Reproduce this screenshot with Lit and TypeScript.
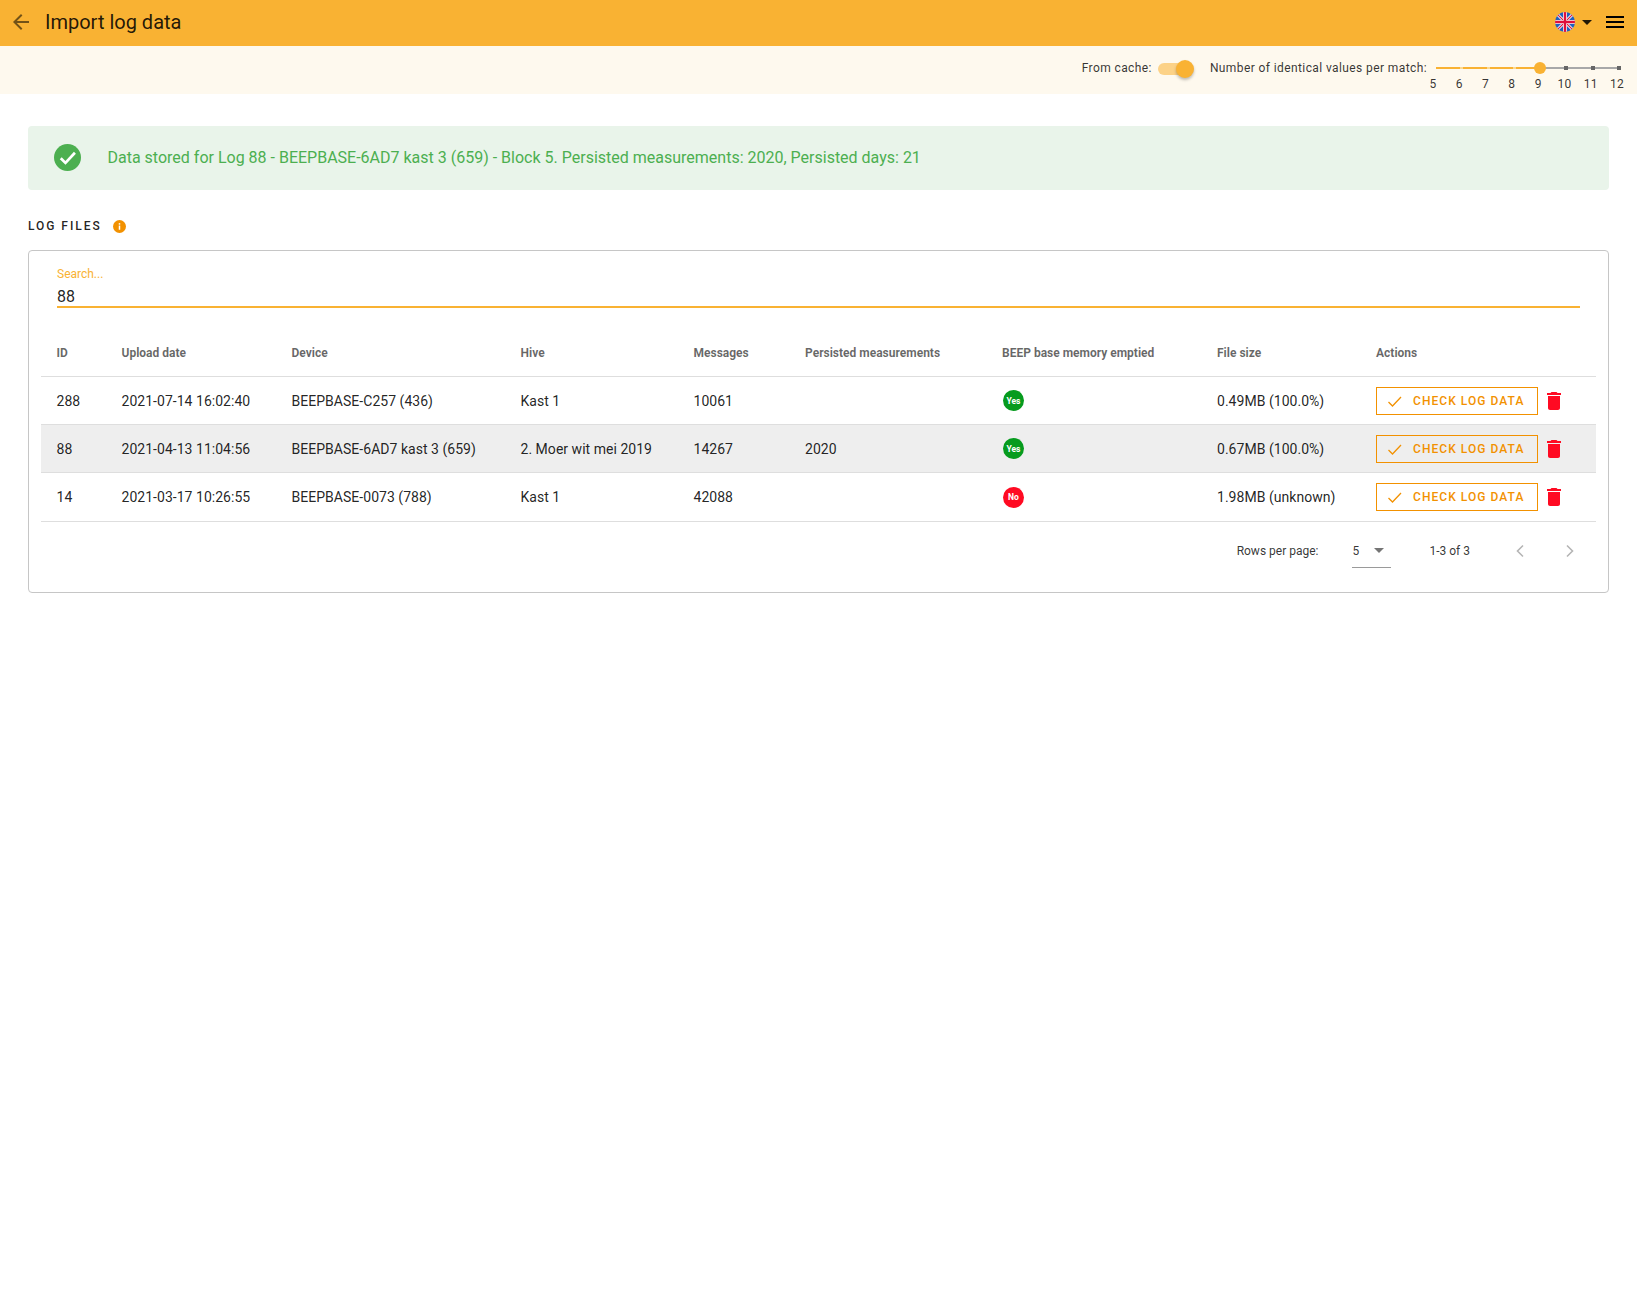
import { LitElement, html, css, svg } from "lit";
import { customElement } from "lit/decorators.js";

const rows = [
  { id: "288", date: "2021-07-14 16:02:40", device: "BEEPBASE-C257 (436)", hive: "Kast 1", msgs: "10061", pers: "", ok: true, size: "0.49MB (100.0%)", hl: false, h: 48 },
  { id: "88", date: "2021-04-13 11:04:56", device: "BEEPBASE-6AD7 kast 3 (659)", hive: "2. Moer wit mei 2019", msgs: "14267", pers: "2020", ok: true, size: "0.67MB (100.0%)", hl: true, h: 48 },
  { id: "14", date: "2021-03-17 10:26:55", device: "BEEPBASE-0073 (788)", hive: "Kast 1", msgs: "42088", pers: "", ok: false, size: "1.98MB (unknown)", hl: false, h: 49 },
];
const heads = ["ID", "Upload date", "Device", "Hive", "Messages", "Persisted measurements", "BEEP base memory emptied", "File size", "Actions"];
const marks = ["5", "6", "7", "8", "9", "10", "11", "12"];
const gaps = [29, 56, 82];
const ticks = [133, 160, 186];

const flag = svg`<svg class="flag" viewBox="0 0 20 20" width="20" height="20">
  <defs><clipPath id="fc"><circle cx="10" cy="10" r="10"/></clipPath></defs>
  <g clip-path="url(#fc)">
    <rect width="20" height="20" fill="#1f5fc0"/>
    <path d="M0 0L20 20M20 0L0 20" stroke="#f4f4f4" stroke-width="3"/>
    <path d="M0 0L20 20M20 0L0 20" stroke="#d8143c" stroke-width="1.1"/>
    <path d="M10 0V20M0 10H20" stroke="#f4f4f4" stroke-width="4"/>
    <path d="M10 0V20M0 10H20" stroke="#e0103a" stroke-width="2.4"/>
  </g></svg>`;

@customElement("app-root")
export class AppRoot extends LitElement {
  static styles = css`
    :host { display: block; min-height: 1305px; background: #fff; font-family: Roboto, sans-serif; color: rgba(0,0,0,.87); }
    * { box-sizing: border-box; }
    .bar { height: 46px; background: #f9b233; display: flex; align-items: center; padding: 0 13px 2px 13px; }
    .back { display: block; margin-right: 16px; }
    .title { font-size: 20px; font-weight: 400; flex: 1; color: rgba(0,0,0,.87); }
    .flag { display: block; }
    .caret { width: 0; height: 0; border: 5px solid transparent; border-top-color: rgba(0,0,0,.87); border-bottom: 0; margin: 0 14px 0 7px; }
    .burger { width: 18px; height: 12px; display: flex; flex-direction: column; justify-content: space-between; }
    .burger i { display: block; height: 2px; background: #000; }
    .sub { height: 48px; background: #fef9ee; display: flex; justify-content: flex-end; padding: 0 16px 0 0; font-size: 12px; letter-spacing: .4px; color: rgba(0,0,0,.8); }
    .cache { display: flex; align-items: flex-start; padding-top: 15px; line-height: 14px; }
    .switch { position: relative; width: 36px; height: 14px; margin: 2px 0 0 6px; }
    .track { position: absolute; left: 0; top: 0; width: 30px; height: 12px; border-radius: 6px; background: #f9b233; opacity: .55; }
    .thumb { position: absolute; left: 18px; top: -3px; width: 18px; height: 18px; border-radius: 50%; background: #f9b233; box-shadow: 0 2px 3px rgba(0,0,0,.25); }
    .num { padding-top: 15px; margin-left: 16px; line-height: 14px; }
    .slider { width: 190px; margin-left: 4px; padding-top: 15px; }
    .rail { position: relative; height: 14px; }
    .rail .g { position: absolute; left: 109px; width: 80px; top: 6px; height: 2px; background: #a8a8a8; }
    .rail .o { position: absolute; left: 5px; width: 104px; top: 6px; height: 2px; background: #f9b233; }
    .rail .gap { position: absolute; top: 6px; width: 3px; height: 2px; background: #fdd98f; }
    .rail .t { position: absolute; top: 5px; width: 4px; height: 4px; background: #666; }
    .rail .k { position: absolute; left: 103px; top: 1px; width: 12px; height: 12px; border-radius: 50%; background: #f9b233; }
    .labels { display: flex; justify-content: space-between; margin: 2px 0 0 -8px; width: 204px; line-height: 14px; }
    .labels span { width: 20px; text-align: center; letter-spacing: .2px; }
    main { padding: 32px 28px 0; }
    .alert { height: 64px; background: #e9f4ea; border-radius: 4px; display: flex; align-items: center; padding: 0 0 1px 26px; color: #4caf50; font-size: 16px; }
    .alert svg { display: block; margin-right: 26.5px; }
    .section { display: flex; align-items: center; height: 14px; margin-top: 29px; font-size: 12px; font-weight: 500; letter-spacing: 1.95px; color: rgba(0,0,0,.87); }
    .section svg { margin-left: 11px; display: block; }
    .card { margin-top: 17px; border: 1px solid #c6c6c6; border-radius: 4px; height: 343px; padding: 0 12px; }
    .search { margin: 16px 16px 0 16px; height: 41px; border-bottom: 2px solid #f9b233; }
    .search label { display: block; font-size: 12px; line-height: 14px; color: #f9b233; }
    .search div { font-size: 16px; line-height: 20px; margin-top: 6px; }
    .tbl { margin-top: 22px; }
    .row { display: grid; grid-template-columns: 65px 170px 229px 173px 111.5px 197px 215px 159px 1fr; align-items: center; padding-left: 15.5px; border-bottom: 1px solid #dedede; font-size: 14px; letter-spacing: .03px; }
    .head { height: 47px; font-size: 12px; font-weight: 700; color: rgba(0,0,0,.6); letter-spacing: 0; }
    .hl { background: #eee; }
    .badge { width: 21px; height: 21px; margin-left: 1px; border-radius: 50%; color: #fff; font-size: 8.5px; font-weight: 700; display: flex; align-items: center; justify-content: center; letter-spacing: 0; }
    .yes { background: #069b1e; } .no { background: #ff0a22; }
    .acts { display: flex; align-items: center; }
    .check { width: 162px; height: 28px; border: 1px solid #f29100; color: #f29100; font-size: 12px; font-weight: 500; letter-spacing: 1.05px; display: flex; align-items: center; padding-left: 10px; }
    .check svg { display: block; margin-right: 10px; }
    .trash { display: block; margin-left: 7px; }
    .foot { display: flex; align-items: center; justify-content: flex-end; height: 58px; padding-right: 21px; font-size: 12px; color: rgba(0,0,0,.8); }
    .sel { width: 39px; height: 34px; margin: 0 38px 0 34px; border-bottom: 1px solid #9a9a9a; display: flex; align-items: center; }
    .sel i { width: 0; height: 0; border: 5px solid transparent; border-top-color: rgba(0,0,0,.54); border-bottom: 0; margin-left: 15px; }
    .pg { margin-right: 45px; }
    .chev { display: block; }
    .chev.next { margin-left: 40px; }
  `;

  render() {
    return html`
      <div class="bar">
        <svg class="back" width="16" height="16" viewBox="4 4 16 16"><path fill="rgba(0,0,0,.54)" d="M20 11H7.83l5.59-5.59L12 4l-8 8 8 8 1.41-1.41L7.83 13H20v-2z"/></svg>
        <div class="title">Import log data</div>
        ${flag}
        <span class="caret"></span>
        <div class="burger"><i></i><i></i><i></i></div>
      </div>
      <div class="sub">
        <div class="cache">From cache:
          <div class="switch"><div class="track"></div><div class="thumb"></div></div>
        </div>
        <div class="num">Number of identical values per match:</div>
        <div class="slider">
          <div class="rail">
            <div class="g"></div>
            <div class="o"></div>
            ${gaps.map((x) => html`<div class="gap" style="left:${x}px"></div>`)}
            ${ticks.map((x) => html`<div class="t" style="left:${x}px"></div>`)}
            <div class="k"></div>
          </div>
          <div class="labels">${marks.map((m) => html`<span>${m}</span>`)}</div>
        </div>
      </div>
      <main>
        <div class="alert">
          <svg width="27" height="27" viewBox="2 2 20 20"><path fill="#4caf50" d="M12 2C6.48 2 2 6.48 2 12s4.48 10 10 10 10-4.48 10-10S17.52 2 12 2z"/><path fill="none" stroke="#fff" stroke-width="2" d="M7 12.5l3.5 3.5L17.5 8.5"/></svg>
          Data stored for Log 88 - BEEPBASE-6AD7 kast 3 (659) - Block 5. Persisted measurements: 2020, Persisted days: 21
        </div>
        <div class="section">LOG FILES
          <svg width="13" height="13" viewBox="0 0 14 14"><circle cx="7" cy="7" r="7" fill="#f29100"/><rect x="6.2" y="6" width="1.6" height="4.5" fill="#fff"/><rect x="6.2" y="3.4" width="1.6" height="1.6" fill="#fff"/></svg>
        </div>
        <div class="card">
          <div class="search"><label>Search...</label><div>88</div></div>
          <div class="tbl">
            <div class="row head">${heads.map((h) => html`<div>${h}</div>`)}</div>
            ${rows.map((r) => html`
              <div class="row ${r.hl ? "hl" : ""}" style="height:${r.h}px">
                <div>${r.id}</div><div>${r.date}</div><div>${r.device}</div><div>${r.hive}</div><div>${r.msgs}</div><div>${r.pers}</div>
                <div><div class="badge ${r.ok ? "yes" : "no"}">${r.ok ? "Yes" : "No"}</div></div>
                <div>${r.size}</div>
                <div class="acts">
                  <div class="check"><svg width="16" height="16" viewBox="0 0 16 16"><path fill="none" stroke="#f29100" stroke-width="1.3" d="M1.5 9l4 4L14 4"/></svg>CHECK LOG DATA</div>
                  <svg class="trash" width="18" height="20" viewBox="4 2 16 20"><path fill="#ff0a22" d="M6 19c0 1.1.9 2 2 2h8c1.1 0 2-.9 2-2V7H6v12zM19 4h-3.5l-1-1h-5l-1 1H5v2h14V4z"/></svg>
                </div>
              </div>`)}
          </div>
          <div class="foot">
            <span>Rows per page:</span>
            <div class="sel">5<i></i></div>
            <span class="pg">1-3 of 3</span>
            <svg class="chev" width="10" height="14" viewBox="0 0 10 14"><path fill="none" stroke="#b5b5b5" stroke-width="1.6" d="M8 1.5L2.5 7 8 12.5"/></svg>
            <svg class="chev next" width="10" height="14" viewBox="0 0 10 14"><path fill="none" stroke="#b5b5b5" stroke-width="1.6" d="M2 1.5L7.5 7 2 12.5"/></svg>
          </div>
        </div>
      </main>
    `;
  }
}
